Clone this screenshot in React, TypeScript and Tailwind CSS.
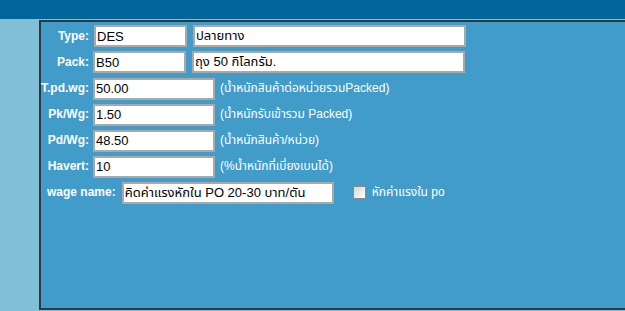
const font = { fontFamily: '"Liberation Sans", Arial, "Noto Sans Thai", "Noto Sans", sans-serif' }

const rows = [
  { label: "T.pd.wg:", value: "50.00", note: "(น้ำหนักสินค้าต่อหน่วยรวมPacked)" },
  { label: "Pk/Wg:", value: "1.50", note: "(น้ำหนักรับเข้ารวม Packed)" },
  { label: "Pd/Wg:", value: "48.50", note: "(น้ำหนักสินค้า/หน่วย)" },
  { label: "Havert:", value: "10", note: "(%น้ำหนักที่เบี่ยงเบนได้)" },
]

function Field({ value, w }: { value: string; w: string }) {
  return (
    <input
      readOnly
      value={value}
      className={`${w} h-[22px] shrink-0 border-2 border-[#a9a9a9] bg-white px-[1px] text-[13px] leading-[18px] text-black outline-none`}
      style={font}
    />
  )
}

function Label({ text }: { text: string }) {
  return (
    <div className="w-[50px] shrink-0 whitespace-nowrap pr-[2px] text-right text-[12px] font-bold leading-[14px] text-white">
      {text}
    </div>
  )
}

export default function App() {
  return (
    <div className="h-[311px] w-[625px] overflow-hidden bg-[#80bfd6]" style={font}>
      <div className="h-[19px] bg-[#006699]" />
      <div className="ml-[39px] mt-[1px] h-[290px] w-[600px] border-2 border-r-0 border-[#30393d] bg-[#429cca]">
        <div className="flex flex-col gap-[4px] pt-[3px]">
          <div className="flex h-[22px] items-center">
            <Label text="Type:" />
            <div className="ml-[3px] flex gap-[6px]">
              <Field value="DES" w="w-[93px]" />
              <Field value="ปลายทาง" w="w-[273px]" />
            </div>
          </div>
          <div className="flex h-[22px] items-center">
            <Label text="Pack:" />
            <div className="ml-[2px] flex gap-[6px]">
              <Field value="B50" w="w-[93px]" />
              <Field value="ถุง 50 กิโลกรัม." w="w-[273px]" />
            </div>
          </div>
          {rows.map((r) => (
            <div key={r.label} className="flex h-[22px] items-center">
              <Label text={r.label} />
              <div className="ml-[2px]">
                <Field value={r.value} w="w-[122px]" />
              </div>
              <span className="ml-[5px] whitespace-nowrap text-[12px] leading-[14px] text-white">{r.note}</span>
            </div>
          ))}
          <div className="flex h-[22px] items-center pl-[6px]">
            <span className="whitespace-nowrap text-[12px] font-bold leading-[14px] text-white">wage name:</span>
            <div className="ml-[6px]">
              <Field value="คิดค่าแรงหักใน PO 20-30 บาท/ตัน" w="w-[212px]" />
            </div>
            <span className="ml-[19px] h-[13px] w-[13px] border border-[#8a8a8a] bg-gradient-to-br from-[#d6d6d6] to-white" />
            <span className="ml-[6px] whitespace-nowrap text-[12px] leading-[14px] text-white">หักค่าแรงใน po</span>
          </div>
        </div>
      </div>
    </div>
  )
}
